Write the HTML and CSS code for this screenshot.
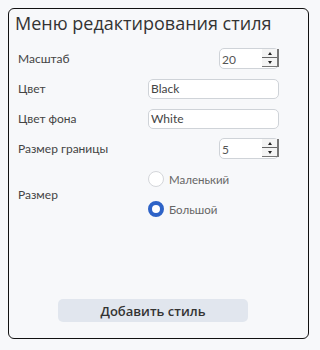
FILE: index.html
```html
<!DOCTYPE html>
<html lang="ru">
<head>
<meta charset="utf-8">
<link rel="stylesheet" href="styles.css">
</head>
<body>
<div class="card">
  <h1 class="title">Меню редактирования стиля</h1>
  <div class="form">
    <div class="row">
      <span class="label">Масштаб</span>
      <div class="control end">
        <div class="num">
          <span class="num-value">20</span>
          <span class="spin"><span class="spin-btn"><span class="tri up"></span></span><span class="spin-btn"><span class="tri down"></span></span></span>
        </div>
      </div>
    </div>
    <div class="row">
      <span class="label">Цвет</span>
      <div class="control"><div class="text-input">Black</div></div>
    </div>
    <div class="row">
      <span class="label">Цвет фона</span>
      <div class="control"><div class="text-input">White</div></div>
    </div>
    <div class="row">
      <span class="label">Размер границы</span>
      <div class="control end">
        <div class="num">
          <span class="num-value">5</span>
          <span class="spin"><span class="spin-btn"><span class="tri up"></span></span><span class="spin-btn"><span class="tri down"></span></span></span>
        </div>
      </div>
    </div>
    <div class="row radio-row">
      <span class="label">Размер</span>
      <div class="control radios">
        <div class="radio"><span class="circle"></span><span class="radio-text">Маленький</span></div>
        <div class="radio"><span class="circle checked"></span><span class="radio-text">Большой</span></div>
      </div>
    </div>
  </div>
  <div class="actions">
    <button class="btn">Добавить стиль</button>
  </div>
</div>
</body>
</html>
```
FILE: styles.css
```css
html, body { background: #f7f8fa; }
body {
  margin: 8px;
  font-family: Lato, "Open Sans", sans-serif;
  color: #333;
}
.card {
  box-sizing: border-box;
  width: 301px;
  height: 331px;
  border: 1px solid #111;
  border-radius: 6px;
  background: #f7f8fa;
  padding: 0 0 0 6px;
  display: flex;
  flex-direction: column;
}
.title {
  margin: 1px 0 0 0;
  font-family: "Open Sans", sans-serif;
  font-size: 18px;
  font-weight: 400;
  line-height: 26px;
  color: #333;
}
.form {
  display: flex;
  flex-direction: column;
  gap: 9px;
  margin-top: 12px;
  padding-left: 3px;
}
.row {
  display: grid;
  grid-template-columns: 130px 131px;
  align-items: center;
  height: 21px;
}
.label {
  font-size: 12px;
  color: #444;
}
.control { display: flex; }
.control.end { justify-content: flex-end; }
.text-input {
  box-sizing: border-box;
  width: 131px;
  height: 20px;
  border: 1px solid #cfd3d8;
  border-radius: 5px;
  background: #fff;
  font-size: 12px;
  line-height: 18px;
  padding-left: 2px;
  color: #444;
}
.num {
  box-sizing: border-box;
  width: 60px;
  height: 21px;
  border: 1px solid #cfd3d8;
  border-radius: 5px;
  background: #fff;
  display: flex;
  align-items: stretch;
  padding: 2px 0 1px 2px;
}
.num-value {
  flex: 1;
  font-size: 12px;
  line-height: 17px;
  color: #555;
}
.spin {
  width: 15px;
  display: flex;
  flex-direction: column;
  border-right: 2px solid #777;
  border-bottom: 1px solid #777;
  margin-top: -2px;
  margin-right: -1px;
}
.spin-btn {
  flex: 1;
  display: flex;
  align-items: center;
  justify-content: center;
  background: #f4f4f4;
}
.spin-btn + .spin-btn { border-top: 1px solid #666; }
.tri { width: 0; height: 0; border-left: 2px solid transparent; border-right: 2px solid transparent; }
.tri.up { border-bottom: 3px solid #222; }
.tri.down { border-top: 3px solid #222; }
.radio-row {
  height: 50px;
  margin-top: 1px;
}
.radios {
  flex-direction: column;
  gap: 10px;
}
.radio {
  display: flex;
  align-items: center;
  height: 20px;
  gap: 5px;
}
.circle {
  box-sizing: border-box;
  width: 16px;
  height: 16px;
  border-radius: 50%;
  border: 1px solid #d4d6da;
  background: #fff;
}
.circle.checked {
  border: 4px solid #2e63c7;
}
.radio-text {
  font-size: 11.5px;
  color: #666;
}
.actions {
  margin-top: auto;
  margin-bottom: 16px;
  padding-left: 43px;
}
.btn {
  width: 190px;
  height: 23px;
  border: none;
  border-radius: 5px;
  background: #e1e6ee;
  font-family: "Open Sans", "Noto Sans", sans-serif;
  font-size: 13px;
  font-weight: 600;
  color: #333;
  padding: 0;
}
```
